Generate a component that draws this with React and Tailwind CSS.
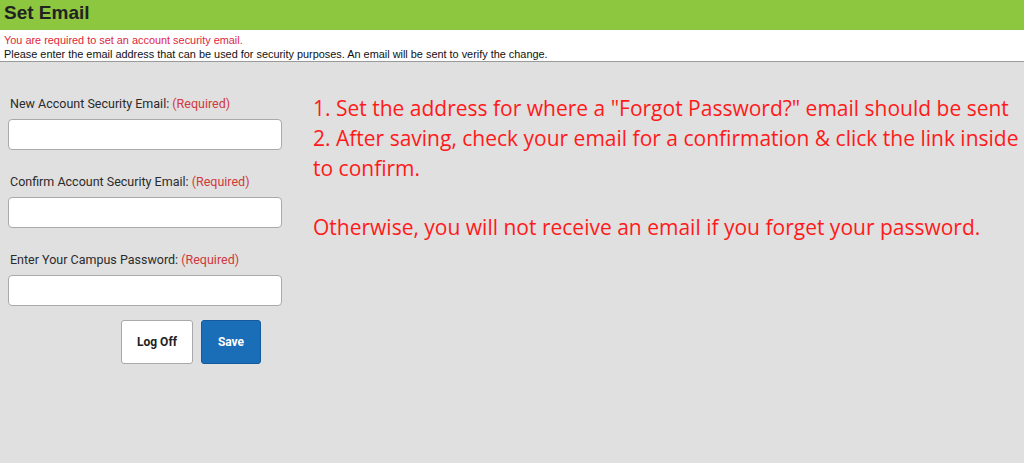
import React from 'react';

const Field = ({ label, type = 'text' }) => (
  <div className="flex flex-col">
    <label className="pl-[2px] text-[12.5px] leading-[14px] text-[#2b2b2b]">
      {label}: <span className="text-[#d0393e]">(Required)</span>
    </label>
    <input
      type={type}
      className="mt-[8px] h-[31px] w-[274px] rounded-[4px] border border-[#a9a9a9] bg-white px-2 outline-none"
    />
  </div>
);

export default function App() {
  return (
    <div className="min-h-[463px] bg-[#e0e0e0]" style={{ fontFamily: 'Arial' }}>
      {/* Title bar */}
      <header className="h-[30px] bg-[#8dc63f] px-[4px] pt-[2px]">
        <h1 className="text-[19px] font-bold leading-[22px] text-[#222]" style={{ fontFamily: '"Liberation Sans", Arial, sans-serif' }}>
          Set Email
        </h1>
      </header>

      {/* Notice */}
      <div
        className="h-[32px] border-b border-[#9a9a9a] bg-white px-[4px] pt-[3px] text-[10.9px] leading-[14px]"
        style={{ fontFamily: '"Liberation Sans", Arial, sans-serif' }}
      >
        <p className="text-[#e0263a]">You are required to set an account security email.</p>
        <p className="text-[#111]">Please enter the email address that can be used for security purposes. An email will be sent to verify the change.</p>
      </div>

      <main className="flex pt-[35px]">
        {/* Form */}
        <form className="flex w-[305px] flex-col gap-[25px] pl-[8px]" style={{ fontFamily: 'Roboto, sans-serif' }}>
          <Field label="New Account Security Email" />
          <Field label="Confirm Account Security Email" />
          <Field label="Enter Your Campus Password" type="password" />
          <div className="-mt-[11px] flex gap-[8px] pl-[113px]">
            <button type="button" className="h-[44px] w-[72px] rounded-[3px] border border-[#a9a9a9] bg-white text-[12px] font-bold text-[#222]">
              Log Off
            </button>
            <button type="button" className="h-[44px] w-[60px] rounded-[3px] border border-[#155a9c] bg-[#1a6eb8] text-[12px] font-bold text-white">
              Save
            </button>
          </div>
        </form>

        {/* Instructions */}
        <div className="-mt-[4px] pl-[8px] text-[21px] leading-[30px] text-[#ff1a1a]" style={{ fontFamily: '"Open Sans", "Noto Sans", sans-serif' }}>
          <p className="whitespace-nowrap">1. Set the address for where a "Forgot Password?" email should be sent</p>
          <p className="whitespace-nowrap">2. After saving, check your email for a confirmation &amp; click the link inside</p>
          <p>to confirm.</p>
          <p className="mt-[29px]">Otherwise, you will not receive an email if you forget your password.</p>
        </div>
      </main>
    </div>
  );
}
